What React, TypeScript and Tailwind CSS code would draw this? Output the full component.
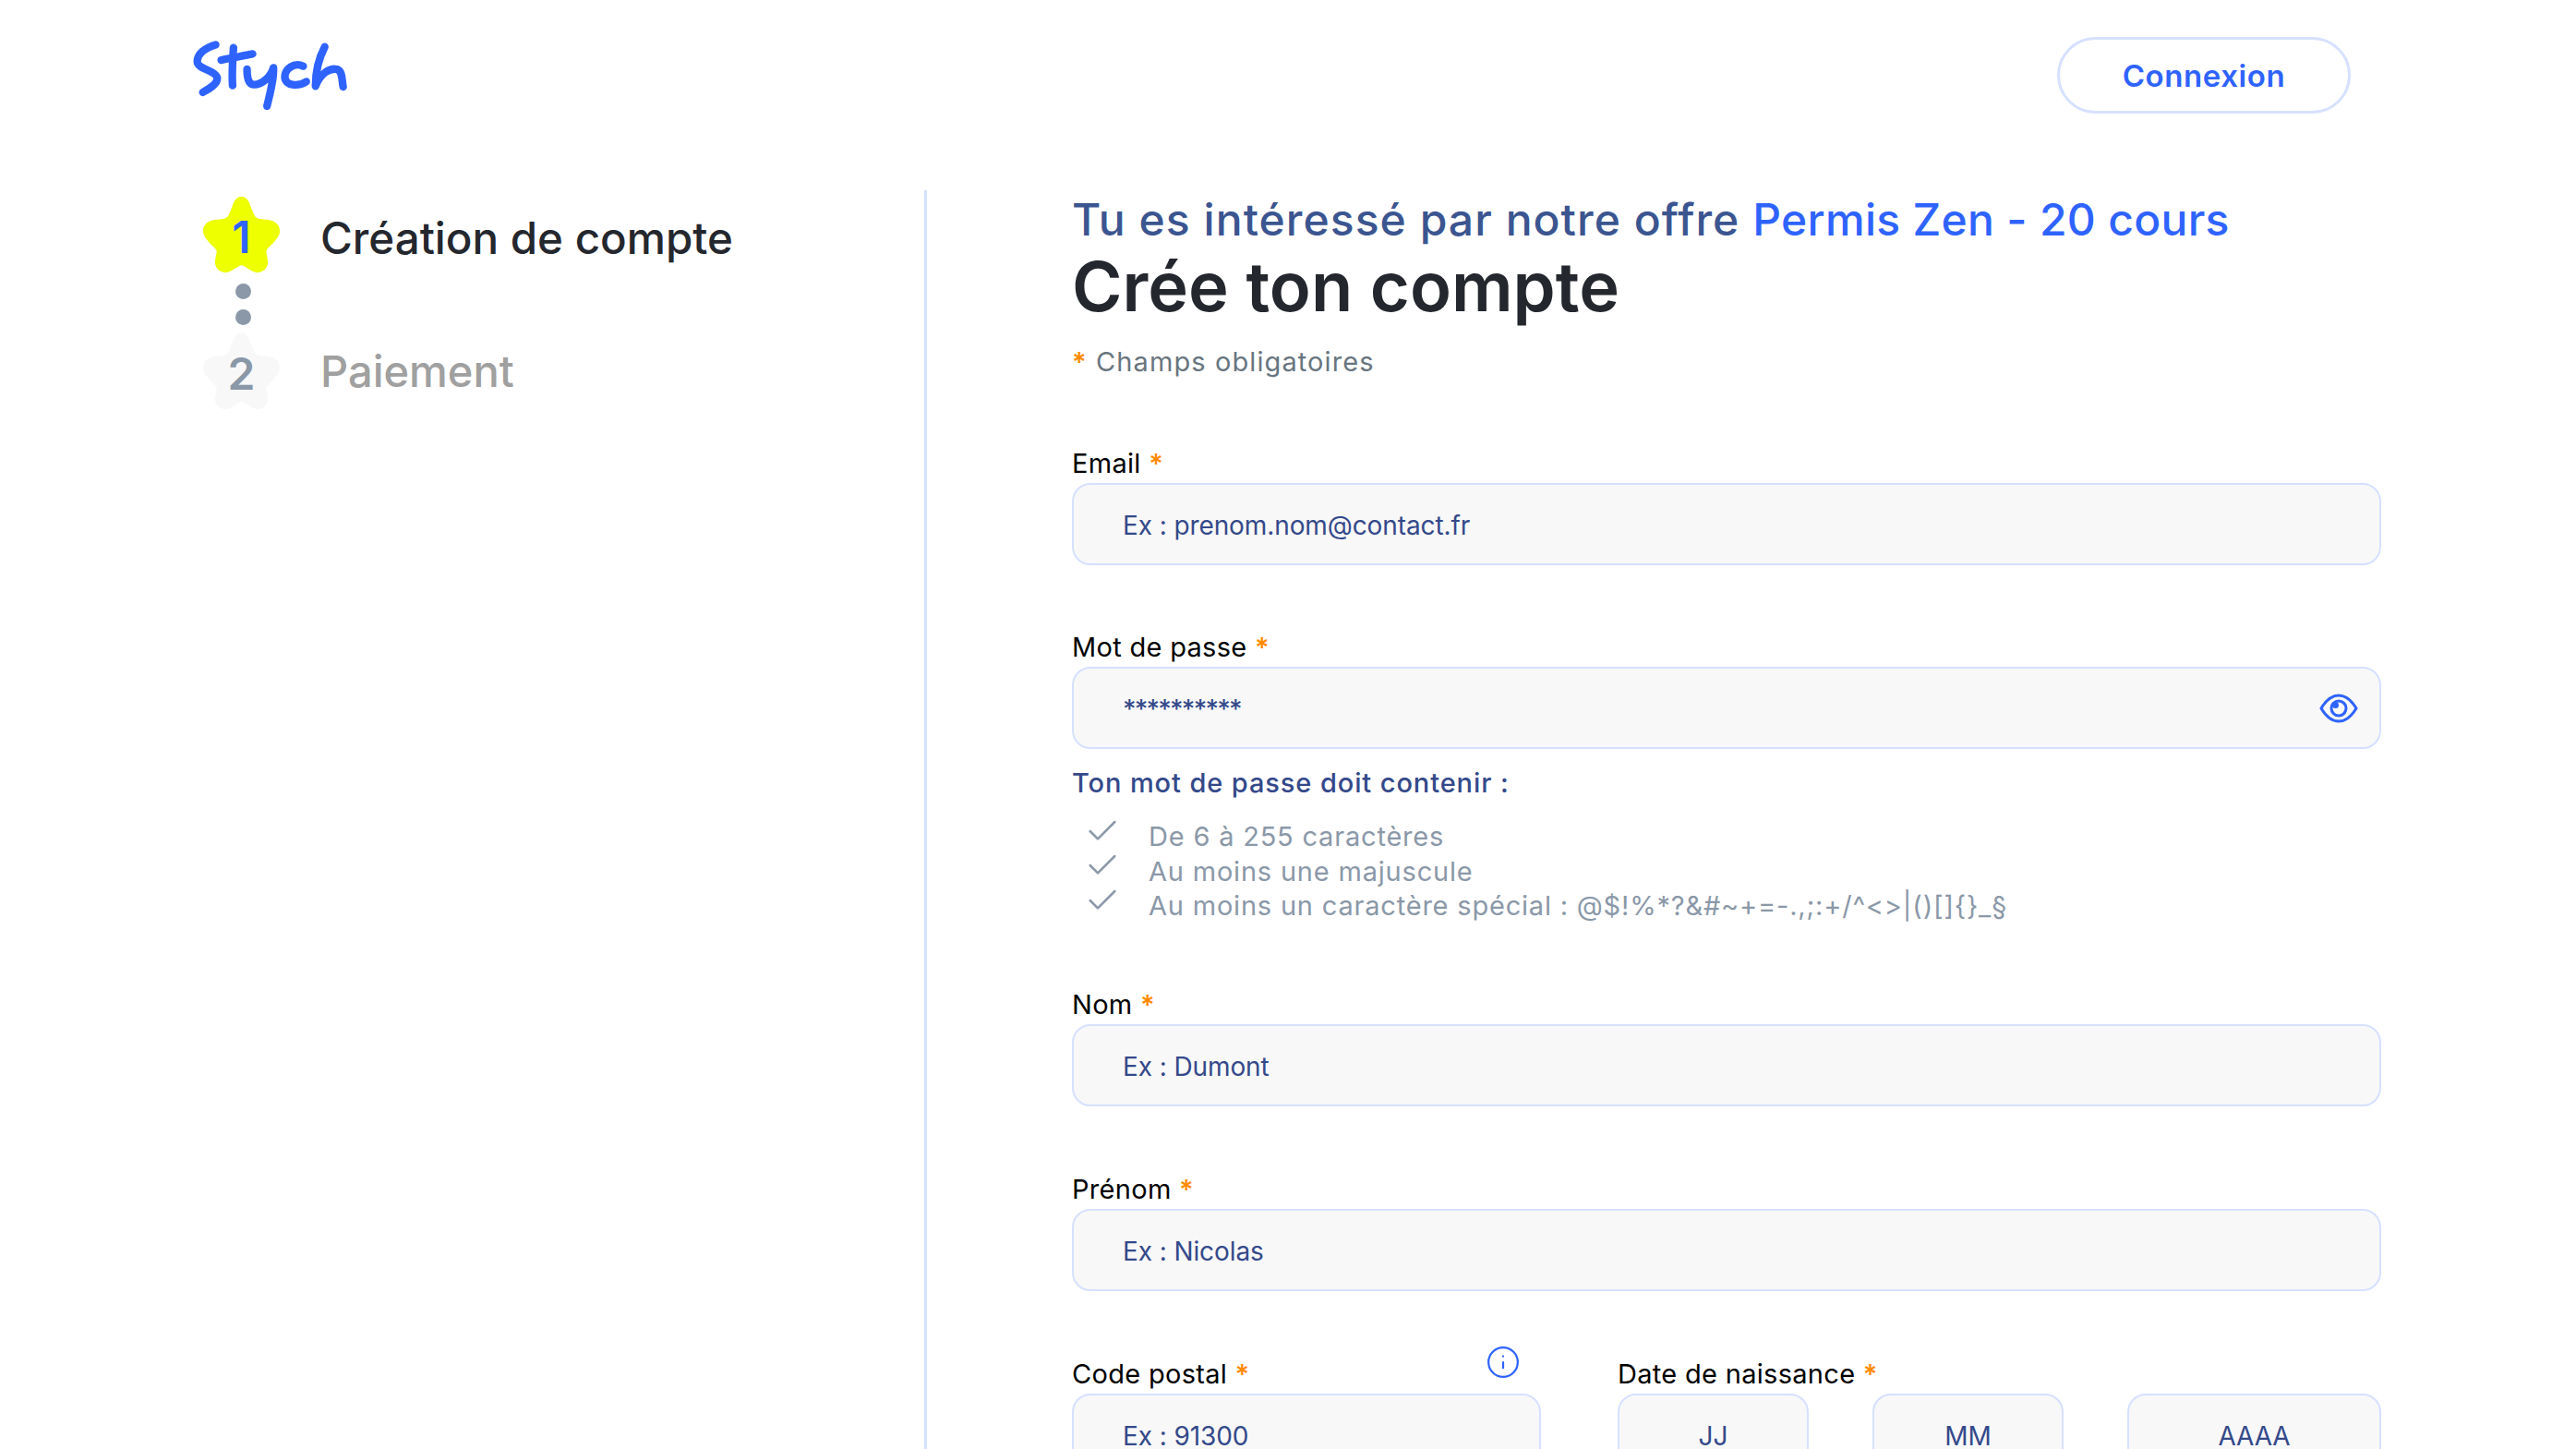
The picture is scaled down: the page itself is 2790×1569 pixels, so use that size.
import { Check, Info } from 'lucide-react'

const font = { fontFamily: 'Inter, "Liberation Sans", sans-serif' }

function StarBadge({ fill, color, n }: { fill: string; color: string; n: string }) {
  return (
    <div className="relative flex h-[82px] w-[83px] shrink-0 items-center justify-center">
      <svg viewBox="0 0 83 82" className="absolute inset-0 h-full w-full" fill={fill}>
        <path d="M41.500 0C48 0 50 6 52 12L55 19C56 22 58 23 61 24L70 25C78 26 83 30 83 37C83 42 80 45 77 49L71 55C68 58 68 60 69 63L70 69C71 76 66 82 59 82C55 82 52 80 49 78L44 75C42 74 41 74 39 75L34 78C31 80 28 82 24 82C17 82 12 76 13 69L14 63C15 60 15 58 12 55L6 49C3 45 0 42 0 37C0 30 5 26 13 25L22 24C25 23 27 22 28 19L31 12C33 6 35 0 41.500 0Z" />
      </svg>
      <span className="relative pt-[5px] text-[48px] leading-none font-semibold" style={{ color }}>
        {n}
      </span>
    </div>
  )
}

function Logo() {
  return (
    <svg viewBox="80 60 520 240" className="h-[80px] w-[173px]" fill="none" stroke="#2f63ff" strokeWidth="25" strokeLinecap="round" strokeLinejoin="round">
      <path d="M160 85C125 95 100 115 100 140C100 165 165 170 165 195C165 215 135 230 118 240" />
      <path d="M218 95C215 140 212 180 215 218" />
      <path d="M178 135C210 130 250 120 280 115" />
      <path d="M262 165C262 190 265 215 285 215C310 215 340 190 348 160C350 200 335 250 327 285" />
      <path d="M445 155C415 140 385 165 385 190C385 220 430 222 455 205" />
      <path d="M515 92C495 130 485 180 485 220C500 180 530 160 555 165C575 172 570 205 575 222" />
    </svg>
  )
}

function Eye() {
  return (
    <svg viewBox="0 0 42 32" className="h-[32px] w-[42px]" fill="none" stroke="#2f63ff" strokeWidth="3">
      <path d="M2 16C8 6 14 2 21 2s13 4 19 14c-6 10-12 14-19 14S8 26 2 16z" />
      <circle cx="21" cy="16" r="8" />
      <circle cx="17.500" cy="12.500" r="3.500" fill="#2f63ff" stroke="none" />
    </svg>
  )
}

function Label({ text }: { text: string }) {
  return (
    <label className="block h-[40px] text-[29px] leading-[38px] tracking-[0.3px] text-black">
      {text} <span className="font-semibold text-[#ff8a00]">*</span>
    </label>
  )
}

function Field({ placeholder, center, children }: { placeholder: React.ReactNode; center?: boolean; children?: React.ReactNode }) {
  return (
    <div className={`flex h-[89px] items-center justify-between rounded-[20px] border-2 border-[#d6e1ff] bg-[#f8f8f8] text-[28px] tracking-[-0.1px] text-[#34498a] ${center ? 'justify-center' : 'pr-[23px] pl-[53px]'}`}>
      <span className="pt-[2px]">{placeholder}</span>
      {children}
    </div>
  )
}

const rules = [
  'De 6 à 255 caractères',
  'Au moins une majuscule',
  'Au moins un caractère spécial : @$!%*?&#~+=-.,;:+/^<>|()[]{}_§',
]

export default function App() {
  return (
    <div className="h-[1569px] w-[2790px] overflow-hidden bg-white" style={font}>
      <header className="flex h-[206px] items-start justify-between pt-[40px] pr-[244px] pl-[207px]">
        <Logo />
        <button className="flex h-[83px] w-[318px] items-center justify-center rounded-full border-[3px] border-[#d6e1ff] pt-[2px] text-[33px] font-semibold tracking-[0.6px] text-[#2f63ff]">
          Connexion
        </button>
      </header>
      <main className="flex h-[1363px]">
        <aside className="w-[1004px] shrink-0 border-r-[3px] border-[#d6e1ff] pl-[220px]">
          <div className="flex items-center gap-[44px] pt-[7px]">
            <StarBadge fill="#eeff00" color="#2f63ff" n="1" />
            <span className="pt-[8px] text-[47.5px] font-medium text-[#24272e]">Création de compte</span>
          </div>
          <div className="flex w-[83px] flex-col items-center gap-[11px] pt-[12px] pb-[9px] pl-[4px]">
            <span className="h-[17px] w-[17px] rounded-full bg-[#8a98a8]" />
            <span className="h-[17px] w-[17px] rounded-full bg-[#8a98a8]" />
          </div>
          <div className="flex items-center gap-[44px]">
            <StarBadge fill="#f8f8f8" color="#8a98a8" n="2" />
            <span className="text-[47px] font-medium text-[#a0a0a0]">Paiement</span>
          </div>
        </aside>
        <section className="w-[1575px] pt-[4px] pl-[157px]">
          <h2 className="text-[48px] leading-[56px] font-medium tracking-[1.05px] text-[#3b5590]">
            Tu es intéressé par notre offre <span className="tracking-[0.3px] text-[#2f63ff]">Permis Zen - 20 cours</span>
          </h2>
          <h1 className="text-[74px] leading-[88px] font-semibold text-[#24272e]">Crée ton compte</h1>
          <p className="mt-[20px] text-[29px] leading-[36px] tracking-[1.100px] text-[#68757f]">
            <span className="font-semibold text-[#ff8a00]">*</span> Champs obligatoires
          </p>
          <div className="mt-[73px]">
            <Label text="Email" />
            <Field placeholder="Ex : prenom.nom@contact.fr" />
          </div>
          <div className="mt-[70px]">
            <Label text="Mot de passe" />
            <Field placeholder={<span className="font-medium tracking-[-1.8px]">**********</span>}>
              <Eye />
            </Field>
          </div>
          <p className="mt-[19px] text-[29px] leading-[36px] font-medium tracking-[0.9px] text-[#34498a]">Ton mot de passe doit contenir :</p>
          <ul className="mt-[21px] text-[29px] leading-[37.5px] tracking-[0.8px] text-[#8a98a8]">
            {rules.map((r) => (
              <li key={r} className="flex h-[37.5px] items-center gap-[30px] pl-[13px]">
                <Check size={40} strokeWidth={1.5} className="shrink-0 -translate-y-[6px]" />
                <span>{r}</span>
              </li>
            ))}
          </ul>
          <div className="mt-[69.5px]">
            <Label text="Nom" />
            <Field placeholder="Ex : Dumont" />
          </div>
          <div className="mt-[71px]">
            <Label text="Prénom" />
            <Field placeholder="Ex : Nicolas" />
          </div>
          <div className="mt-[71px] flex w-[1418px] gap-[83px]">
            <div className="w-[508px]">
              <div className="flex items-start justify-between">
                <Label text="Code postal" />
                <Info size={38} strokeWidth={1.4} className="mr-[22px] -mt-[13px] text-[#2f63ff]" />
              </div>
              <Field placeholder="Ex : 91300" />
            </div>
            <div className="flex-1">
              <Label text="Date de naissance" />
              <div className="flex gap-[69px]">
                <div className="w-[207px]"><Field placeholder="JJ" center /></div>
                <div className="w-[207px]"><Field placeholder="MM" center /></div>
                <div className="w-[275px]"><Field placeholder="AAAA" center /></div>
              </div>
            </div>
          </div>
        </section>
      </main>
    </div>
  )
}
